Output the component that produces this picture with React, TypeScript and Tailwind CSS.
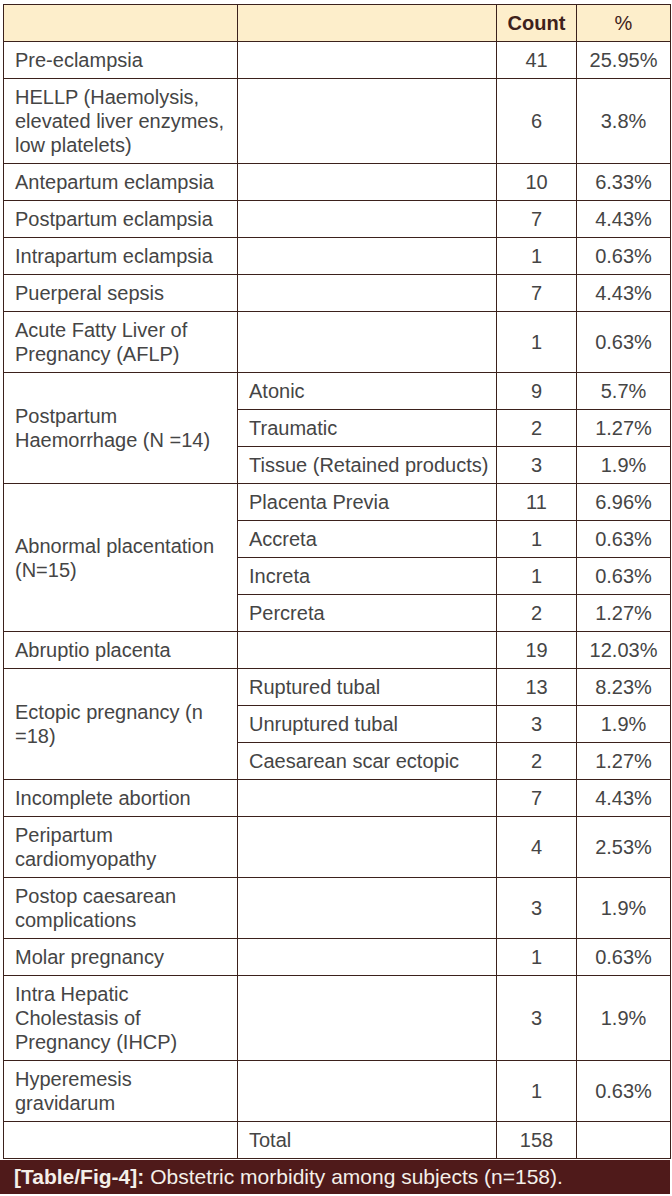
import React from "react";

type Row = {
  label?: string;
  span?: number;
  sub?: string;
  count: string;
  pct: string;
};

const rows: Row[] = [
  { label: "Pre-eclampsia", count: "41", pct: "25.95%" },
  { label: "HELLP (Haemolysis, elevated liver enzymes, low platelets)", count: "6", pct: "3.8%" },
  { label: "Antepartum eclampsia", count: "10", pct: "6.33%" },
  { label: "Postpartum eclampsia", count: "7", pct: "4.43%" },
  { label: "Intrapartum eclampsia", count: "1", pct: "0.63%" },
  { label: "Puerperal sepsis", count: "7", pct: "4.43%" },
  { label: "Acute Fatty Liver of Pregnancy (AFLP)", count: "1", pct: "0.63%" },
  { label: "Postpartum Haemorrhage (N =14)", span: 3, sub: "Atonic", count: "9", pct: "5.7%" },
  { sub: "Traumatic", count: "2", pct: "1.27%" },
  { sub: "Tissue (Retained products)", count: "3", pct: "1.9%" },
  { label: "Abnormal placentation (N=15)", span: 4, sub: "Placenta Previa", count: "11", pct: "6.96%" },
  { sub: "Accreta", count: "1", pct: "0.63%" },
  { sub: "Increta", count: "1", pct: "0.63%" },
  { sub: "Percreta", count: "2", pct: "1.27%" },
  { label: "Abruptio placenta", count: "19", pct: "12.03%" },
  { label: "Ectopic pregnancy (n =18)", span: 3, sub: "Ruptured tubal", count: "13", pct: "8.23%" },
  { sub: "Unruptured tubal", count: "3", pct: "1.9%" },
  { sub: "Caesarean scar ectopic", count: "2", pct: "1.27%" },
  { label: "Incomplete abortion", count: "7", pct: "4.43%" },
  { label: "Peripartum cardiomyopathy", count: "4", pct: "2.53%" },
  { label: "Postop caesarean complications", count: "3", pct: "1.9%" },
  { label: "Molar pregnancy", count: "1", pct: "0.63%" },
  { label: "Intra Hepatic Cholestasis of Pregnancy (IHCP)", count: "3", pct: "1.9%" },
  { label: "Hyperemesis gravidarum", count: "1", pct: "0.63%" },
];

const cell = "border border-[#3b211c] py-[6px] leading-[24px] align-middle";

export default function App() {
  return (
    <div
      className="w-[672px] h-[1196px] bg-white pt-[4px] text-[20px] text-[#454545]"
      style={{ fontFamily: '"Liberation Sans", Arial, sans-serif' }}
    >
      <div className="pl-[3px]">
        <table className="table-fixed border-collapse w-[667px]">
          <colgroup>
            <col className="w-[234px]" />
            <col className="w-[259px]" />
            <col className="w-[80px]" />
            <col className="w-[94px]" />
          </colgroup>
          <thead>
            <tr className="bg-[#fdeecb]">
              <th className={cell}></th>
              <th className={cell}></th>
              <th className={`${cell} text-center font-bold text-[#3d211b]`}>Count</th>
              <th className={`${cell} text-center font-normal text-[#3d211b]`}>%</th>
            </tr>
          </thead>
          <tbody>
            {rows.map((r, i) => (
              <tr key={i}>
                {r.label !== undefined && (
                  <td rowSpan={r.span ?? 1} className={`${cell} px-[11px] text-left`}>
                    {r.label}
                  </td>
                )}
                <td className={`${cell} pl-[11px] pr-[2px] text-left whitespace-nowrap`}>
                  {r.sub ?? ""}
                </td>
                <td className={`${cell} text-center`}>{r.count}</td>
                <td className={`${cell} text-center`}>{r.pct}</td>
              </tr>
            ))}
            <tr>
              <td className={cell}></td>
              <td className={`${cell} pl-[11px]`}>Total</td>
              <td className={`${cell} text-center`}>158</td>
              <td className={cell}></td>
            </tr>
          </tbody>
        </table>
      </div>
      <div className="mt-[1px] w-[670px] h-[34px] bg-[#4f1a1a] text-[#f4efe9] px-[14px] flex items-center text-[21px]">
        <span className="font-bold mr-[6px]">[Table/Fig-4]:</span>
        <span>Obstetric morbidity among subjects (n=158).</span>
      </div>
    </div>
  );
}
